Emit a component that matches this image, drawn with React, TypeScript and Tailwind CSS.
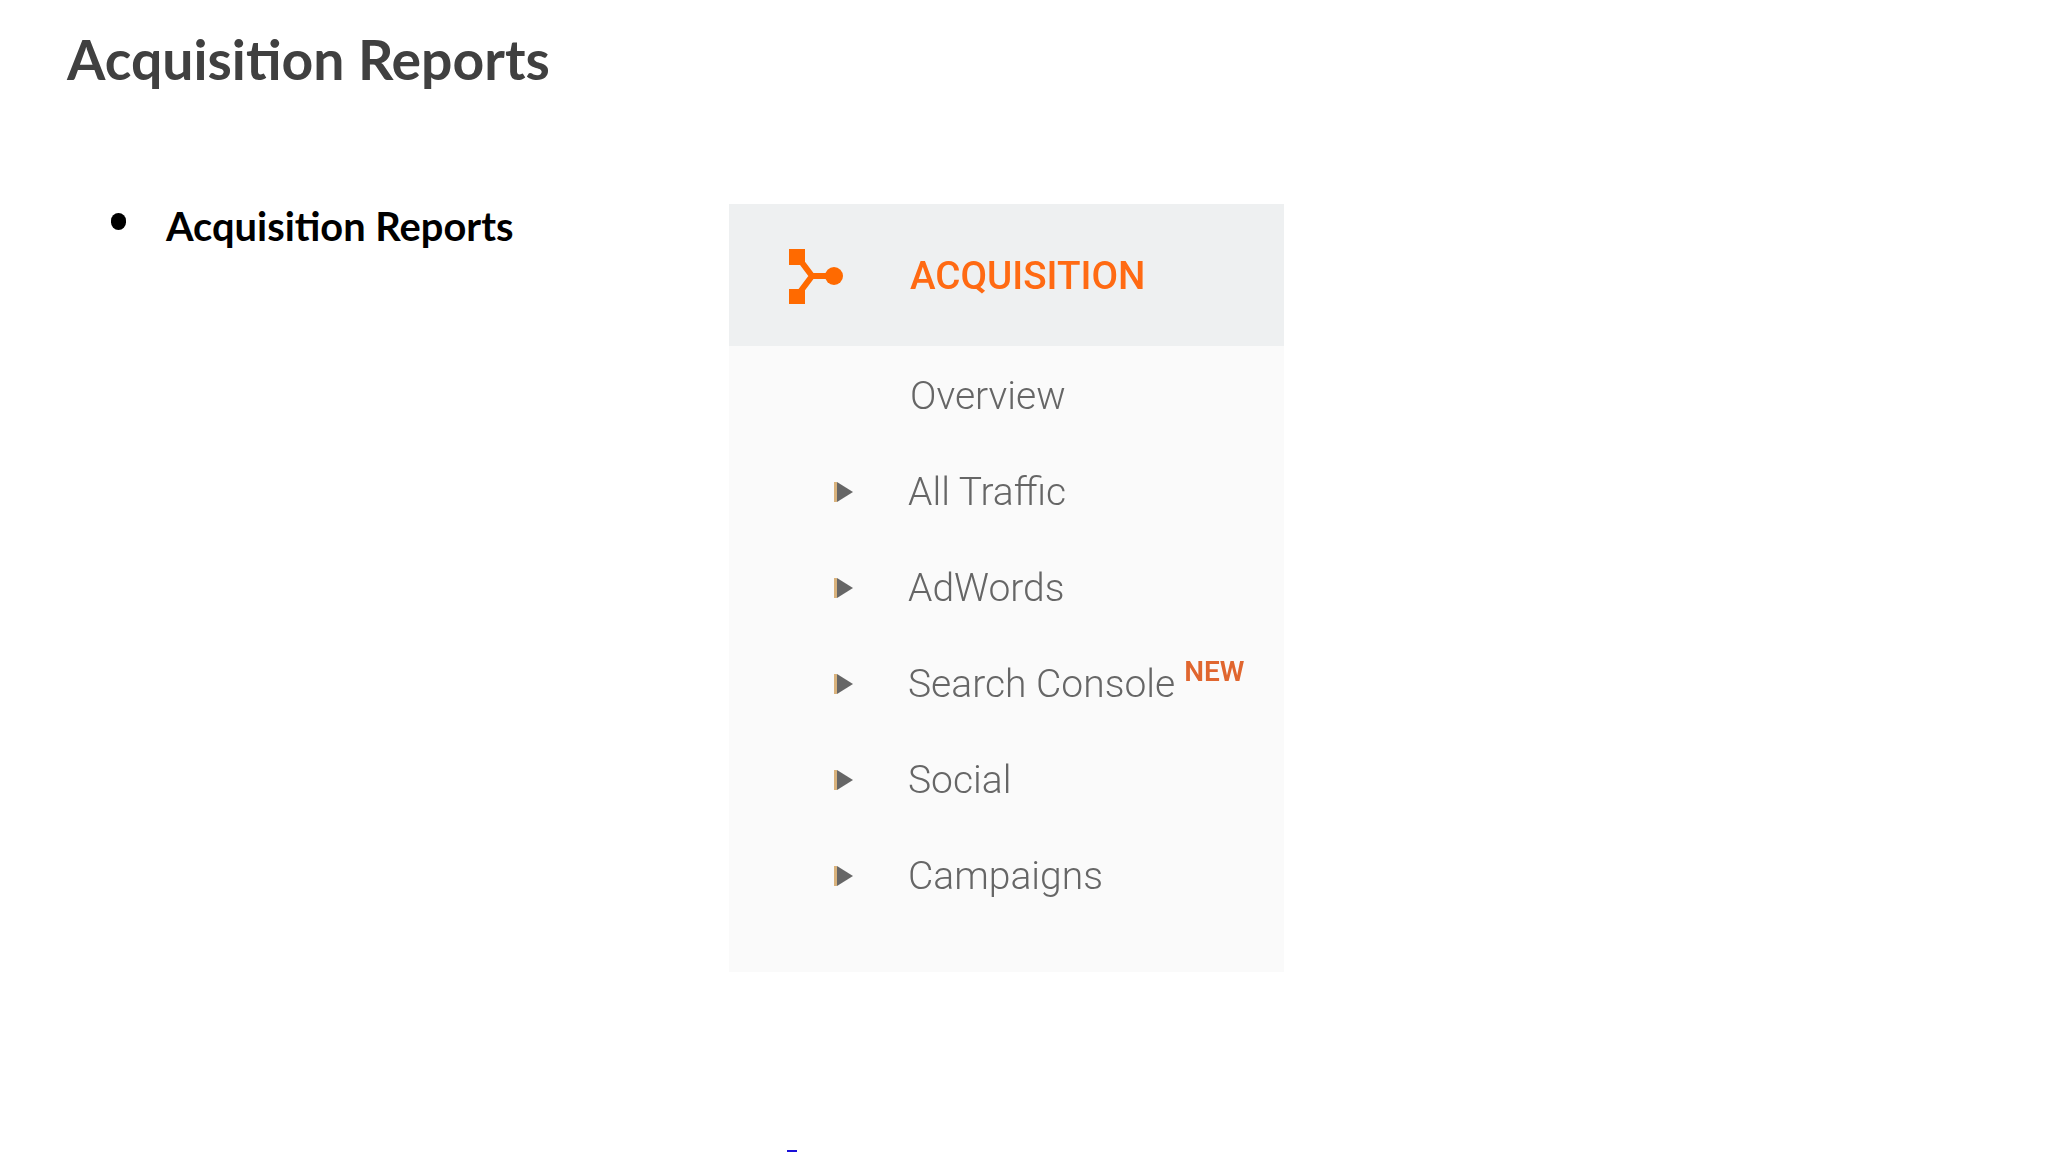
const items = [
  { label: "All Traffic" },
  { label: "AdWords" },
  { label: "Search Console", isNew: true },
  { label: "Social" },
  { label: "Campaigns" },
];

function Caret() {
  return (
    <svg width="19" height="20" viewBox="0 0 19 20" className="shrink-0">
      <rect x="0" y="0" width="3" height="20" fill="#d9b27c" />
      <polygon points="3,0 19,10 3,20" fill="#666666" />
    </svg>
  );
}

function AcquisitionIcon() {
  return (
    <svg width="56" height="56" viewBox="0 0 56 56" className="shrink-0">
      <rect x="1" y="1" width="16" height="16" fill="#ff6a00" />
      <rect x="1" y="41" width="16" height="15" fill="#ff6a00" />
      <path d="M12 12 L24 28 L12 44 M24 28 L46 28" fill="none" stroke="#ff6a00" strokeWidth="6" />
      <circle cx="46" cy="28" r="9" fill="#ff6a00" />
    </svg>
  );
}

export default function App() {
  return (
    <div className="relative h-[1152px] w-full overflow-hidden bg-white font-['Lato',sans-serif]">
      {/* Slide title */}
      <h1 className="pl-[67px] pt-[28px] text-[55.3px] leading-[62px] font-bold text-[#404040]">
        Acquisition Reports
      </h1>

      <div className="mt-[113px] flex items-start">
        {/* Bullet column */}
        <div className="flex w-[729px] shrink-0 items-start pl-[111px]">
          <span className="mt-[10px] h-[17px] w-[15px] rounded-full bg-black" />
          <span className="ml-[40px] text-[39.8px] leading-[46px] font-bold text-black">
            Acquisition Reports
          </span>
        </div>

        {/* Analytics sidebar */}
        <div className="mt-px w-[555px] font-['Roboto',sans-serif] blur-[0.6px]">
          <div className="flex h-[142px] items-center bg-[#eef0f1] pl-[59px] pt-[2px]">
            <AcquisitionIcon />
            <span className="ml-[66px] text-[38.6px] font-medium text-[#ff6a13]">ACQUISITION</span>
          </div>
          <div className="flex h-[626px] flex-col bg-[#fafafa] pt-[2px]">
            <div className="flex h-[96px] items-center pl-[181px] text-[39px] font-light text-[#666666]">
              Overview
            </div>
            {items.map((item) => (
              <div key={item.label} className="flex h-[96px] items-center pl-[105px]">
                <Caret />
                <span className="ml-[55px] text-[39px] font-light text-[#666666]">{item.label}</span>
                {item.isNew && (
                  <span className="mb-[24px] ml-[9px] text-[28px] font-semibold text-[#e0662f]">NEW</span>
                )}
              </div>
            ))}
          </div>
        </div>
      </div>

      {/* Stray link underline at the slide's bottom edge */}
      <div className="absolute bottom-0 left-[787px] h-[2px] w-[10px] bg-[#1a10d8]" />
    </div>
  );
}
